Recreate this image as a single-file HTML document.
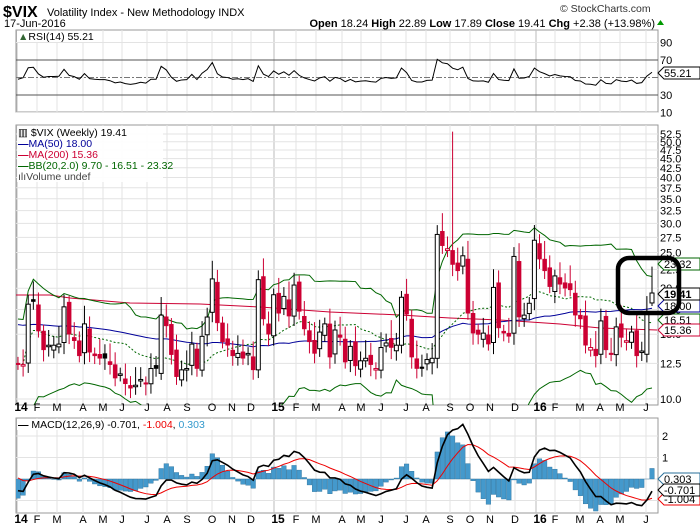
<!DOCTYPE html>
<html><head><meta charset="utf-8">
<style>
body{margin:0;background:#fff;width:700px;height:530px;overflow:hidden;font-family:"Liberation Sans",sans-serif;}
svg{position:absolute;left:0;top:0}
text{font-family:"Liberation Sans",sans-serif;}
</style></head>
<body>
<svg id="s" width="700" height="530" xmlns="http://www.w3.org/2000/svg">
<defs>
<clipPath id="cm"><rect x="16" y="125" width="642" height="280"/></clipPath>
<clipPath id="cr"><rect x="16" y="30" width="642" height="82"/></clipPath>
<clipPath id="cd"><rect x="16" y="418" width="642" height="95"/></clipPath>
</defs>
<g id="grid"></g>
<g id="plot"></g>
<text x="3" y="17" font-size="16" font-weight="bold">$VIX</text>
<text x="47" y="16" font-size="11">Volatility Index - New Methodology  INDX</text>
<text x="4" y="27" font-size="11">17-Jun-2016</text>
<text x="560" y="12" font-size="10.5" fill="#333">© StockCharts.com</text>
<text x="655" y="27" font-size="11" text-anchor="end"><tspan font-weight="bold">Open</tspan> 18.24 <tspan font-weight="bold">High</tspan> 22.89 <tspan font-weight="bold">Low</tspan> 17.89 <tspan font-weight="bold">Close</tspan> 19.41 <tspan font-weight="bold">Chg</tspan> +2.38 (+13.98%)</text>
<polygon points="657,25 664,25 660.5,20" fill="#090"/>
<rect x="17" y="31" width="68" height="11" fill="#fff"/>
<text x="18" y="40" font-size="10.5"><tspan fill="#363">▲</tspan>RSI(14) 55.21</text>
<rect x="17" y="126" width="146" height="56" fill="#fff" opacity="0.9"/>
<text x="18" y="136" font-size="10.5">▥ $VIX (Weekly) 19.41</text>
<text x="18" y="147" font-size="10.5" fill="#000099"><tspan font-weight="bold">—</tspan>MA(50) 18.00</text>
<text x="18" y="158" font-size="10.5" fill="#cc0033"><tspan font-weight="bold">—</tspan>MA(200) 15.36</text>
<text x="18" y="169" font-size="10.5" fill="#006600"><tspan font-weight="bold">—</tspan>BB(20,2.0) 9.70 - 16.51 - 23.32</text>
<text x="18" y="180" font-size="10.5" fill="#444">ılıVolume undef</text>
<rect x="17" y="419" width="200" height="11" fill="#fff"/>
<text x="18" y="428" font-size="10.5"><tspan font-weight="bold">—</tspan> MACD(12,26,9) -0.701, <tspan fill="#e00">-1.004</tspan>, <tspan fill="#3399cc">0.303</tspan></text>
<g id="ax"></g>
<rect x="618" y="258" width="61" height="55" rx="11" fill="none" stroke="#000" stroke-width="4.5"/>
</svg>
<script>
var c=[12.5,12.4,18.1,18.4,15.3,13.6,14.0,14.0,14.1,17.8,15.0,14.4,13.1,16.0,13.4,13.1,12.9,12.9,12.4,11.4,11.7,11.0,10.7,10.9,11.3,11.0,12.1,12.1,16.9,15.8,13.2,11.5,12.0,12.1,14.1,12.1,14.8,16.7,21.2,16.1,14.3,14.0,13.1,13.3,12.9,13.3,12.0,21.1,16.5,15.0,19.2,
17.1,19.0,16.8,20.4,17.3,15.5,14.3,13.3,15.2,16.0,13.0,15.4,14.7,12.6,13.9,12.3,12.7,12.9,12.4,12.1,13.8,14.2,13.8,14.0,18.9,17.0,13.0,12.1,12.1,12.8,12.9,28.0,26.1,25.6,23.2,22.3,24.5,17.1,15.1,14.98,15.1,14.1,20.1,15.6,15.1,14.8,24.4,16.7,16.9,18.2,
27.0,24.0,22.3,20.2,21.6,20.5,20.0,19.8,16.9,16.5,14.0,13.8,13.1,16.3,13.6,13.2,15.7,14.7,14.4,15.2,13.1,13.5,17.0,19.41];
var N=c.length,x0=18,dx=(652-18)/(N-1);
function X(i){return x0+i*dx}
function Y(v){return 399-368*Math.log10(v/10)}
function R(v){return 121.25-0.875*v}
function M(v){return 479-21.5*v}
var ns="http://www.w3.org/2000/svg";
function el(p,t,a){var e=document.createElementNS(ns,t);for(var k in a)e.setAttribute(k,a[k]);p.appendChild(e);return e}
var G=document.getElementById('grid'),P=document.getElementById('plot'),A=document.getElementById('ax');
[[30,112],[125,405],[418,513]].forEach(function(r){el(G,'rect',{x:16,y:r[0],width:642,height:r[1]-r[0],fill:'#fff',stroke:'#999','stroke-width':1})});
var mx=[[18,'14',1],[38,'F'],[58,'M'],[84,'A'],[104,'M'],[123,'J'],[148,'J'],[168,'A'],[188,'S'],[213,'O'],[233,'N'],[252,'D'],[275,'15',1],[297,'F'],[317,'M'],[343,'A'],[362,'M'],[382,'J'],[407,'J'],[427,'A'],[451,'S'],[471,'O'],[491,'N'],[516,'D'],[537,'16',1],[556,'F'],[581,'M'],[601,'A'],[621,'M'],[647,'J']];
mx.forEach(function(m){
 [[30,112],[125,405],[418,513]].forEach(function(r){el(G,'line',{x1:m[0]-1,x2:m[0]-1,y1:r[0],y2:r[1],stroke:m[2]?'#bbb':'#e3e3e3'})});
 [411,523].forEach(function(yy){var t=el(A,'text',{x:m[0]-(m[2]?4:1),y:yy,'font-size':m[2]?12:11,'font-weight':m[2]?'bold':'normal','text-anchor':'middle'});t.textContent=m[1];if(m[2])t.setAttribute('x',m[0]+3);});
});
var lv=[10,12.5,15,17.5,20,22.5,25,27.5,30,32.5,35,37.5,40,42.5,45,47.5,50,52.5];
lv.forEach(function(v){el(G,'line',{x1:16,x2:658,y1:Y(v),y2:Y(v),stroke:'#e3e3e3'});var t=el(A,'text',{x:660,y:Y(v)+4,'font-size':11});t.textContent=v.toFixed(1)});
[10,30,50,70,90].forEach(function(v){el(G,'line',{x1:16,x2:658,y1:R(v),y2:R(v),stroke:(v==30||v==70)?'#555':'#e3e3e3','stroke-dasharray':v==50?'6,2,2,2':'',style:v==50?'stroke:#777':''});if(v!=50){var t=el(A,'text',{x:660,y:R(v)+4,'font-size':11});t.textContent=v}});
[-1,0,1,2].forEach(function(v){el(G,'line',{x1:16,x2:658,y1:M(v),y2:M(v),stroke:'#e3e3e3'});if(v>=0){var t=el(A,'text',{x:662,y:M(v)+4,'font-size':11});t.textContent=v}});
var gm=el(P,'g',{'clip-path':'url(#cm)'});
el(gm,'polyline',{points:'16,295 50,295 70,298 130,303 200,304 260,307 330,312 400,315 450,318 500,320 560,324 600,328 657,330',fill:'none',stroke:'#cc0033','stroke-width':1});
function sma(i,n){var s=0,k=0;for(var j=Math.max(0,i-n+1);j<=i;j++){s+=c[j];k++}return s/k}
function sd(i,n){var m=sma(i,n),s=0,k=0;for(var j=Math.max(0,i-n+1);j<=i;j++){s+=(c[j]-m)*(c[j]-m);k++}return Math.sqrt(s/k)}
var up=[],lo=[],mid=[],m50=[];
for(var i=0;i<N;i++){var m=sma(i,20),d=sd(i,20);if(i<6){d=Math.max(d,2)}mid.push(X(i)+','+Y(m));up.push(X(i)+','+Y(m+2*d));lo.push(X(i)+','+Y(Math.max(m-2*d,5)));
 var m5=sma(i,50);if(i<50)m5=(m5*(i+1)+16*(50-i-1))/50;m50.push(X(i)+','+Y(m5));}
el(gm,'polyline',{points:m50.join(' '),fill:'none',stroke:'#000099'});
el(gm,'polyline',{points:mid.join(' '),fill:'none',stroke:'#006600','stroke-dasharray':'2,2'});
el(gm,'polyline',{points:up.join(' '),fill:'none',stroke:'#006600'});
el(gm,'polyline',{points:lo.join(' '),fill:'none',stroke:'#006600'});
for(var i=0;i<N;i++){var cl=c[i],pc=i?c[i-1]:12.9;var o=pc*(1+((i*37%7)-3)*0.01);if(i==N-1)o=18.24;
 var hi=Math.max(o,cl)*(1.04+(i*13%5)*0.02),lw=Math.min(o,cl)*(0.96-(i*7%4)*0.01);if(i==N-1){hi=22.89;lw=17.89}
 if(i==85)hi=53.3;
 var col=cl<pc?'#cc0033':'#000',x=X(i);
 el(gm,'line',{x1:x,x2:x,y1:Y(hi),y2:Y(lw),stroke:col});
 var t=Math.min(Y(o),Y(cl)),h=Math.max(1.5,Math.abs(Y(o)-Y(cl)));
 el(gm,'rect',{x:x-2,y:t,width:4,height:h,fill:cl>o?'#fff':col,stroke:col,'stroke-width':cl>o?1:0.5});
}
var gr=el(P,'g',{'clip-path':'url(#cr)'});var ag=0,al=0,rp=[];
for(var i=1;i<N;i++){var d=c[i]-c[i-1],g=d>0?d:0,l=d<0?-d:0;if(i==1){ag=0.8;al=0.8}ag=(ag*13+g)/14;al=(al*13+l)/14;var r=100-100/(1+ag/al);rp.push(X(i)+','+R(r));}
rp.unshift(X(0)+','+R(48));
el(gr,'polyline',{points:rp.join(' '),fill:'none',stroke:'#000'});
var gd=el(P,'g',{'clip-path':'url(#cd)'});var e12=13.5,e26=14,sg=0.2,mp=[],sp=[];
for(var i=0;i<N;i++){e12=e12+(c[i]-e12)*2/13;e26=e26+(c[i]-e26)*2/27;var mc=e12-e26;sg=sg+(mc-sg)*2/10;
 var hv=(mc-sg)*1.5,x=X(i);el(gd,'rect',{x:x-2.3,y:Math.min(M(hv),M(0)),width:4.6,height:Math.abs(M(hv)-M(0)),fill:'#4499cc',stroke:'#2a6f99','stroke-width':0.4});
 mp.push(x+','+M(mc));sp.push(x+','+M(sg));}
el(gd,'polyline',{points:sp.join(' '),fill:'none',stroke:'#e00'});
el(gd,'polyline',{points:mp.join(' '),fill:'none',stroke:'#000','stroke-width':1.6});
function tag(yy,txt,col,b){el(A,'polygon',{points:'658,'+yy+' 664,'+(yy-6)+' 700,'+(yy-6)+' 700,'+(yy+6)+' 664,'+(yy+6),fill:'#fff',stroke:col});var t=el(A,'text',{x:664,y:yy+4,'font-size':11,fill:'#000','font-weight':b?'bold':'normal'});t.textContent=txt}
tag(264,'23.32','#006600');tag(320,'16.51','#006600');tag(330,'15.36','#cc0033');tag(306,'18.00','#000099');tag(294,'19.41','#000',1);
tag(73,'55.21','#000');tag(479,'0.303','#2a6f99');tag(499,'-1.004','#e00');tag(490,'-0.701','#000');
</script>
</body></html>
